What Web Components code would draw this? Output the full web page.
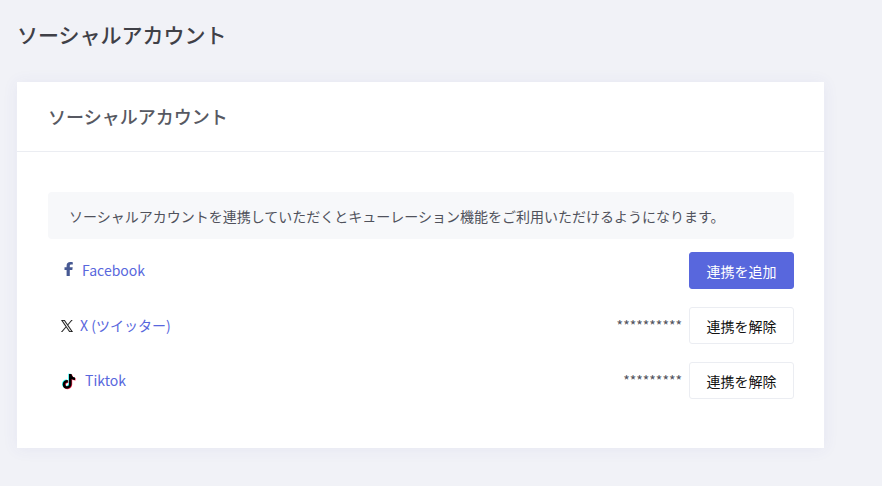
<!DOCTYPE html>
<html lang="ja">
<head>
<meta charset="utf-8">
<meta name="viewport" content="width=device-width, initial-scale=1">
<title>ソーシャルアカウント</title>
<style>
  body {
    margin: 0;
    background: #f1f2f7;
    color: #50525c;
    font: 14px/20px "Noto Sans CJK JP", sans-serif;
  }
</style>
</head>
<body>

<account-page>
  <h1 slot="title">ソーシャルアカウント</h1>
  <content-card>
    <h2 slot="heading">ソーシャルアカウント</h2>
    <info-note>ソーシャルアカウントを連携していただくとキューレーション機能をご利用いただけるようになります。</info-note>
    <social-list>
      <social-account service="facebook" name="Facebook"></social-account>
      <social-account service="x" name="X (ツイッター)" account="**********"></social-account>
      <social-account service="tiktok" name="Tiktok" account="*********"></social-account>
    </social-list>
  </content-card>
</account-page>

<script>
const ICONS = {
  facebook: `
    <svg width="11" height="18" viewBox="0 0 11 18" aria-hidden="true">
      <path fill="#475993" d="M3.600 14V8H1.500V5.300h2.100V3.700C3.600 1.300 5 0 7.200 0c1 0 1.900.1 2.600.2v2.400H8.300C7.100 2.600 6.800 3.200 6.800 4v1.300h2.900L9.300 8H6.800v6z"/>
    </svg>`,
  x: `
    <svg width="12" height="12" viewBox="0 0 1200 1227" aria-hidden="true">
      <path fill="#111" stroke="#111" stroke-width="20" d="M714.163 519.284 1160.890 0H1055.030L667.137 450.887 357.328 0H0l468.492 681.821L0 1226.370h105.866l409.625-476.152 327.181 476.152H1200L714.137 519.284zM569.165 687.828l-47.468-67.894L144.011 79.694h162.604l304.797 435.991 47.468 67.894 396.200 566.721H892.476L569.165 687.854z"/>
    </svg>`,
  tiktok: `
    <svg width="16" height="18" viewBox="0 0 16 18" aria-hidden="true">
      <defs>
        <path id="note" d="M7.500 2h2.500c.2 2 1.400 3.300 3.500 3.500v2.500c-1.300 0-2.500-.4-3.400-1v5c0 2.700-2 4.700-4.500 4.700-2.500 0-4.400-1.900-4.400-4.400 0-2.700 2.300-4.700 5.100-4.400v2.600c-1.300-.3-2.500.5-2.500 1.800 0 1 .8 1.800 1.800 1.800 1.200 0 1.900-.8 1.900-2z"/>
      </defs>
      <use href="#note" fill="#25f4ee" x="-.2" y="-.3"/>
      <use href="#note" fill="#fe2c55" x="1.100" y=".6"/>
      <use href="#note" fill="#000" x=".5" y=".1"/>
    </svg>`
}

class AccountPage extends HTMLElement {
  constructor() {
    super()
    this.attachShadow({mode: 'open'}).innerHTML = `
      <style>
        :host {display: block; padding: 18px 58px 38px 17px}
        ::slotted(h1) {
          margin: 0 0 32px;
          color: #3f4047;
          font-size: 21px;
          font-weight: 500;
          line-height: 32px;
        }
      </style>
      <main>
        <slot name="title"></slot>
        <slot></slot>
      </main>
    `
  }
}

class ContentCard extends HTMLElement {
  constructor() {
    super()
    this.attachShadow({mode: 'open'}).innerHTML = `
      <style>
        :host {
          display: block;
          background: #fff;
          box-shadow: 0 1px 15px 1px rgba(69, 65, 178, .06);
        }
        header {padding: 0 31px; border-bottom: 1px solid #ebedf2}
        ::slotted(h2) {
          margin: 0;
          color: #575962;
          font-size: 18px;
          font-weight: 500;
          line-height: 69px;
        }
        .body {padding: 40px 30px 40px 31px}
      </style>
      <section>
        <header><slot name="heading"></slot></header>
        <div class="body"><slot></slot></div>
      </section>
    `
  }
}

class InfoNote extends HTMLElement {
  constructor() {
    super()
    this.attachShadow({mode: 'open'}).innerHTML = `
      <style>
        :host {
          display: block;
          margin-bottom: 4px;
          padding: 14px 21px 13px;
          border-radius: 4px;
          background: #f7f8fa;
        }
      </style>
      <slot></slot>
    `
  }
}

class SocialList extends HTMLElement {
  constructor() {
    super()
    this.attachShadow({mode: 'open'}).innerHTML = `
      <style>
        :host {display: grid}
      </style>
      <slot></slot>
    `
  }
}

// a row without an account offers to add one
class SocialAccount extends HTMLElement {
  constructor() {
    super()
    this.attachShadow({mode: 'open'})
  }

  connectedCallback() {
    const account = this.getAttribute('account')
    this.shadowRoot.innerHTML = `
      <style>
        :host {
          display: flex;
          align-items: center;
          gap: 7px;
          padding: 9px 0 9px 13px;
        }
        a {
          display: flex;
          align-items: center;
          gap: 7px;
          margin-right: auto;
          color: #5867dd;
          text-decoration: none;
        }
        a:hover {text-decoration: underline}
        svg {flex: none}
        span {padding-bottom: 2px}
        :host([service=facebook]) a {padding-left: 2px; gap: 8px}
        :host([service=tiktok]) a {gap: 8px}
        button {
          width: 105px;
          height: 37px;
          padding: 0;
          border: 1px solid #ebedf2;
          border-radius: 3px;
          background: #fff;
          color: #111;
          font: inherit;
          cursor: pointer;
        }
        button.add {border-color: #5867dd; background: #5867dd; color: #fff}
      </style>
      <a href="#${this.getAttribute('service')}">
        ${ICONS[this.getAttribute('service')]}
        <span>${this.getAttribute('name')}</span>
      </a>
      ${account ? `<span>${account}</span>` : ''}
      <button type="button" class="${account ? 'remove' : 'add'}">${account ? '連携を解除' : '連携を追加'}</button>
    `
  }
}

customElements.define('account-page', AccountPage)
customElements.define('content-card', ContentCard)
customElements.define('info-note', InfoNote)
customElements.define('social-list', SocialList)
customElements.define('social-account', SocialAccount)
</script>
</body>
</html>
